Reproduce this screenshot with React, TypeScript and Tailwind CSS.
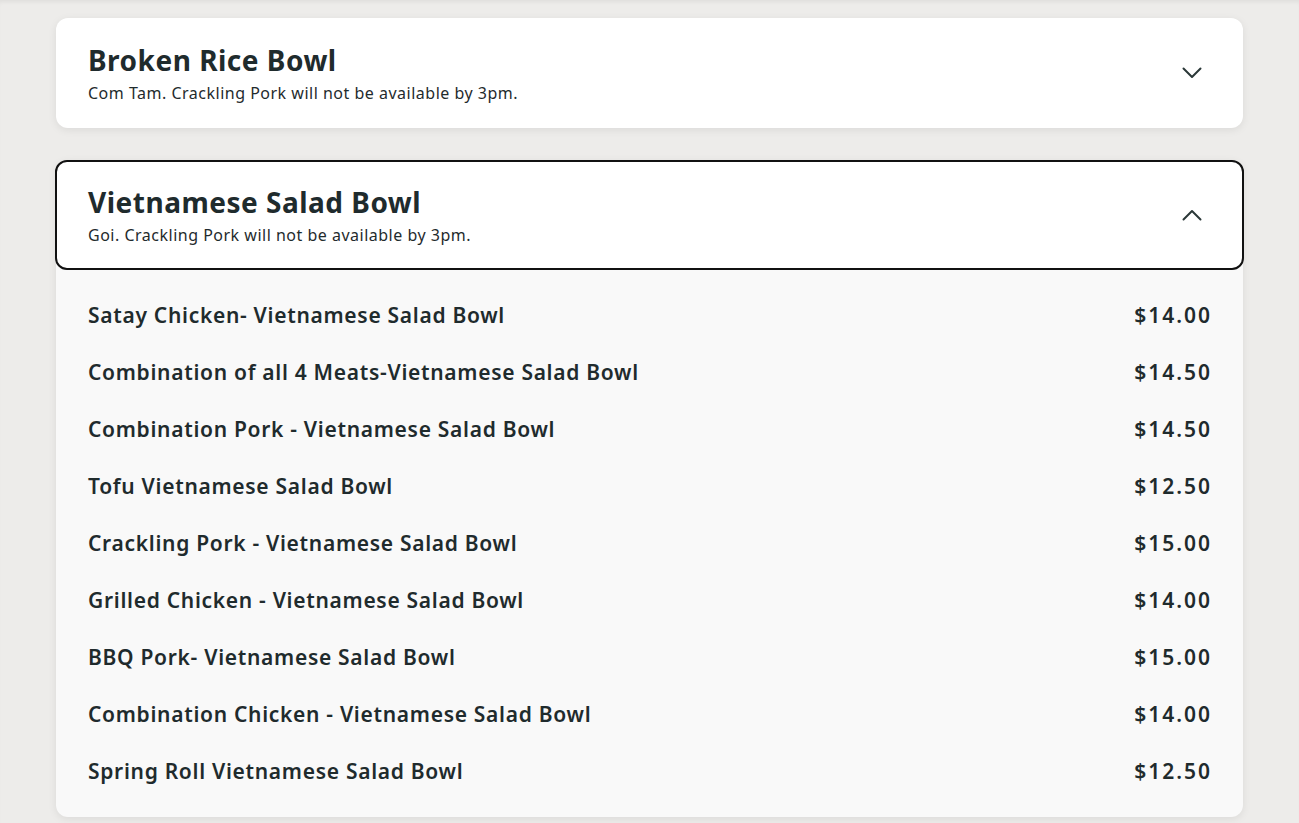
import React, { useState } from "react";

type Item = { name: string; price: string };

const saladItems: Item[] = [
  { name: "Satay Chicken- Vietnamese Salad Bowl", price: "$14.00" },
  { name: "Combination of all 4 Meats-Vietnamese Salad Bowl", price: "$14.50" },
  { name: "Combination Pork - Vietnamese Salad Bowl", price: "$14.50" },
  { name: "Tofu Vietnamese Salad Bowl", price: "$12.50" },
  { name: "Crackling Pork - Vietnamese Salad Bowl", price: "$15.00" },
  { name: "Grilled Chicken - Vietnamese Salad Bowl", price: "$14.00" },
  { name: "BBQ Pork- Vietnamese Salad Bowl", price: "$15.00" },
  { name: "Combination Chicken - Vietnamese Salad Bowl", price: "$14.00" },
  { name: "Spring Roll Vietnamese Salad Bowl", price: "$12.50" },
];

const Chevron = ({ up }: { up: boolean }) => (
  <svg
    width="20"
    height="12"
    viewBox="0 0 20 12"
    fill="none"
    stroke="#2b3838"
    strokeWidth="2"
    strokeLinecap="round"
    strokeLinejoin="round"
  >
    {up ? <path d="M1.5 10.5 10 2l8.5 8.5" /> : <path d="M1.5 1.5 10 10l8.5-8.5" />}
  </svg>
);

const App = () => {
  const [open, setOpen] = useState(true);

  return (
    <div
      className="min-h-[823px] bg-[#edecea] px-14 pt-[18px] text-[#1f2b2d] shadow-[inset_0_4px_4px_-2px_rgba(0,0,0,0.06)]"
      style={{ fontFamily: '"Noto Sans", "Open Sans", sans-serif' }}
    >
      {/* categoria cerrada */}
      <div className="flex h-[110px] items-center justify-between rounded-xl bg-white pl-8 pr-[41px] shadow-[0_2px_8px_rgba(0,0,0,0.08)]">
        <div>
          <h2 className="text-[28px] font-bold leading-[32px] tracking-[0.5px]">Broken Rice Bowl</h2>
          <p className="mt-[7px] text-[16px] leading-5 tracking-[0.5px]">
            Com Tam. Crackling Pork will not be available by 3pm.
          </p>
        </div>
        <Chevron up={false} />
      </div>

      {/* categoria abierta */}
      <div className="mt-8 rounded-xl bg-[#f9f9f9] shadow-[0_2px_8px_rgba(0,0,0,0.08)]">
        <button
          onClick={() => setOpen(!open)}
          className="-mx-px flex h-[110px] w-[calc(100%+2px)] items-center justify-between rounded-xl border-2 border-[#111] bg-white pl-[31px] pr-[40px] text-left"
        >
          <div>
            <h2 className="text-[28px] font-bold leading-[32px] tracking-[0.5px]">Vietnamese Salad Bowl</h2>
            <p className="mt-[7px] text-[16px] leading-5 tracking-[0.5px]">
              Goi. Crackling Pork will not be available by 3pm.
            </p>
          </div>
          <Chevron up={open} />
        </button>
        {open && (
          <ul className="py-[17px] pl-8 pr-[31px]">
            {saladItems.map((item) => (
              <li
                key={item.name}
                className="flex h-[57px] items-center justify-between text-[21px] font-semibold"
              >
                <span className="tracking-[0.7px]">{item.name}</span>
                <span className="tracking-[2px]">{item.price}</span>
              </li>
            ))}
          </ul>
        )}
      </div>
    </div>
  );
};

export default App;
